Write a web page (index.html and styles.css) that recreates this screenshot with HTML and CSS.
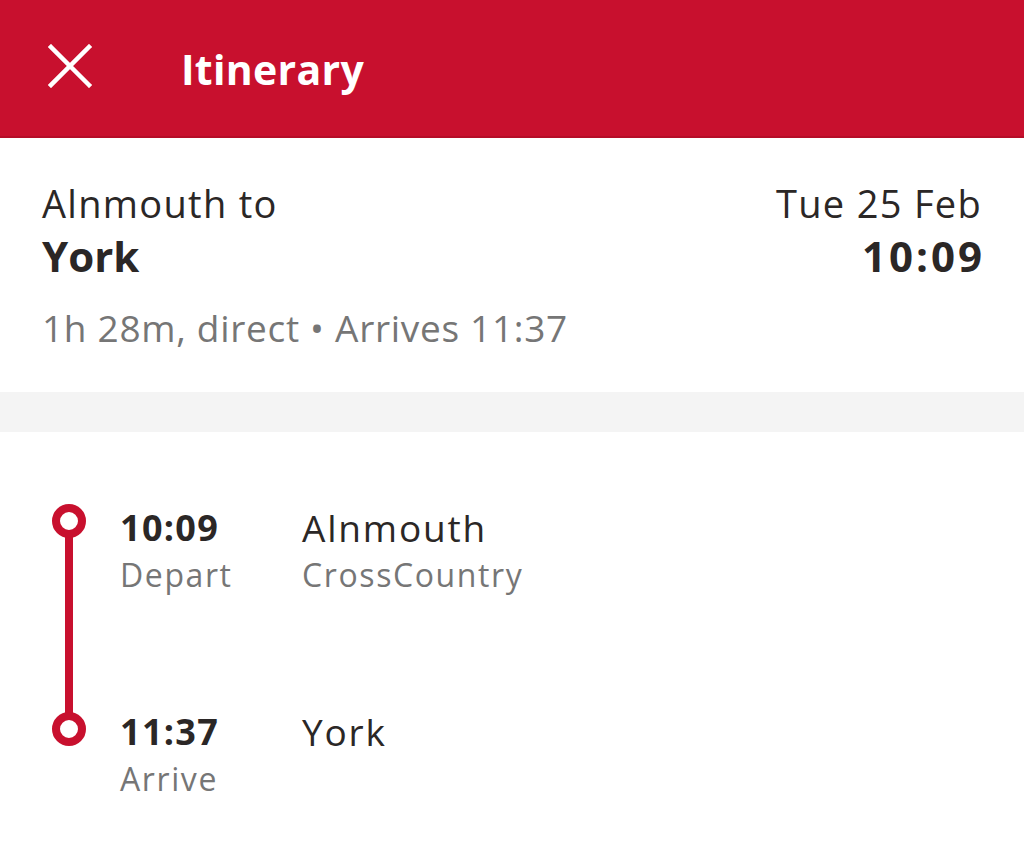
FILE: index.html
```html
<!DOCTYPE html>
<html>
<head>
<meta charset="utf-8">
<link rel="stylesheet" href="styles.css">
</head>
<body>
<header class="topbar">
  <svg class="close" width="44" height="44" viewBox="0 0 44 44"><path d="M3 3 L41 41 M41 3 L3 41" stroke="#fff" stroke-width="4.5" stroke-linecap="square" fill="none"/></svg>
  <h1 class="title">Itinerary</h1>
</header>
<section class="summary">
  <div class="row">
    <div class="from">Alnmouth to</div>
    <div class="date">Tue 25 Feb</div>
  </div>
  <div class="row">
    <div class="to">York</div>
    <div class="time">10:09</div>
  </div>
  <div class="meta">1h 28m, direct • Arrives 11:37</div>
</section>
<div class="band"></div>
<section class="journey">
  <div class="stop first">
    <div class="marker"><span class="dot"></span><span class="line"></span></div>
    <div class="when"><div class="t">10:09</div><div class="sub">Depart</div></div>
    <div class="where"><div class="name">Alnmouth</div><div class="sub">CrossCountry</div></div>
  </div>
  <div class="stop last">
    <div class="marker end"><span class="dot"></span></div>
    <div class="when"><div class="t">11:37</div><div class="sub">Arrive</div></div>
    <div class="where"><div class="name">York</div></div>
  </div>
</section>
</body>
</html>
```
FILE: styles.css
```css
* { box-sizing: border-box; margin: 0; padding: 0; }
body { font-family: "Open Sans", "DejaVu Sans", sans-serif; background: #fff; color: #2b2726; width: 1024px; height: 848px; overflow: hidden; }
.topbar { height: 138px; background: #c8102e; display: flex; align-items: center; padding-left: 48px; border-bottom: 2px solid #b50d28; }
.close { display: block; margin-top: -4px; }
.title { color: #fff; font-size: 41px; font-weight: 700; margin-left: 89px; margin-top: 2px; letter-spacing: 0.3px; }
.summary { padding: 39px 42px 0 42px; height: 254px; }
.row { display: flex; justify-content: space-between; align-items: baseline; }
.from, .date { font-size: 38px; line-height: 52px; font-weight: 400; letter-spacing: 1.3px; }
.to, .time { font-size: 42px; line-height: 54px; font-weight: 700; }
.time { letter-spacing: 3px; margin-right: -3px; }
.meta { margin-top: 20px; font-size: 37px; color: #767676; line-height: 50px; letter-spacing: 0.7px; }
.band { height: 40px; background: #f4f4f4; }
.journey { padding-top: 73px; padding-left: 52px; }
.stop { display: flex; }
.stop.first { height: 204px; }
.marker { width: 34px; position: relative; flex: none; margin-top: -1px; }
.marker.end { margin-top: 3px; }
.dot { display: block; width: 34px; height: 34px; border: 8px solid #c8102e; border-radius: 50%; background: #fff; position: relative; z-index: 1; }
.line { position: absolute; left: 13px; top: 17px; width: 8px; height: 208px; background: #c8102e; }
.when { width: 182px; margin-left: 34px; }
.t { font-size: 36px; font-weight: 700; line-height: 46px; letter-spacing: 1.3px; }
.name { font-size: 37px; line-height: 46px; letter-spacing: 1.8px; }
.sub { font-size: 32px; color: #767676; line-height: 48px; letter-spacing: 1.6px; }
```
